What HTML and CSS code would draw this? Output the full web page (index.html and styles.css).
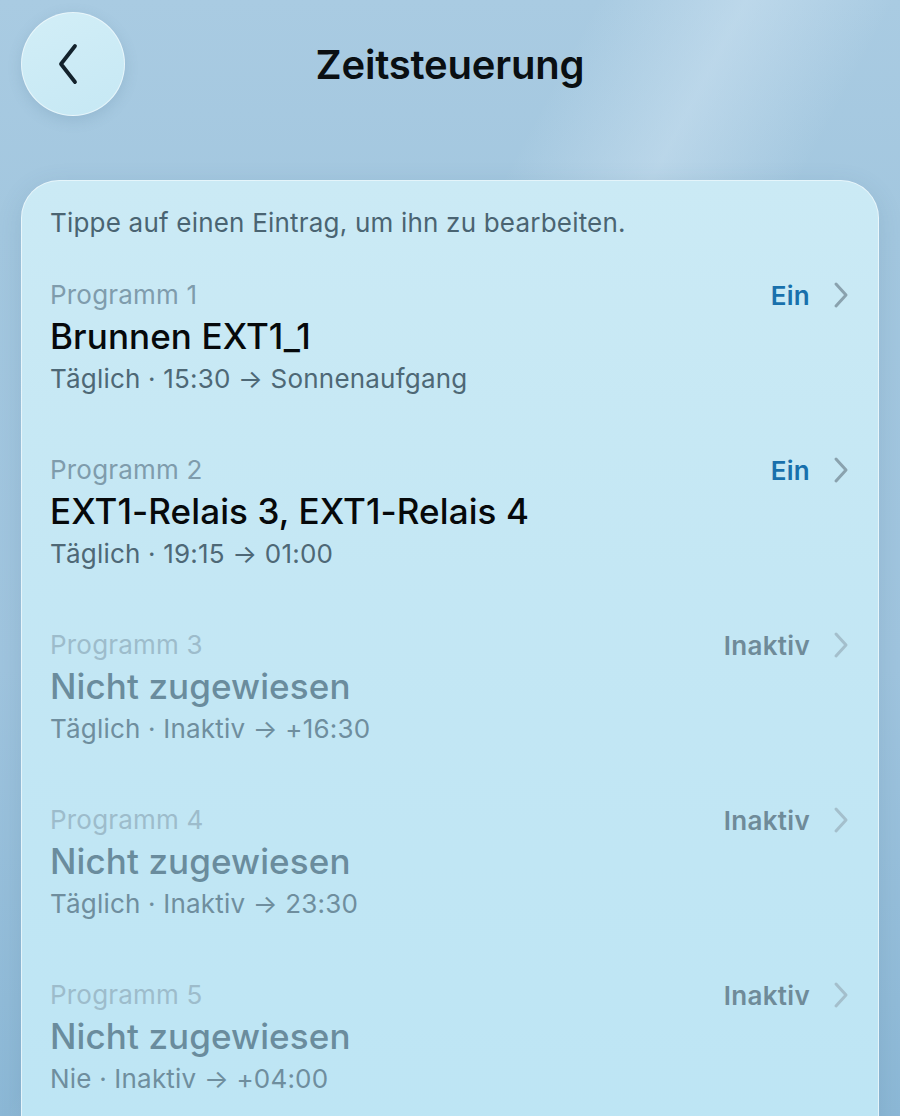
FILE: index.html
```html
<!DOCTYPE html>
<html lang="de">
<head>
<meta charset="utf-8">
<title>Zeitsteuerung</title>
<link rel="stylesheet" href="styles.css">
</head>
<body>
<div class="screen">
  <header class="topbar">
    <button class="back" aria-label="Zurück">
      <svg width="30" height="44" viewBox="0 0 30 44"><path d="M22 4 L8 22 L22 40" fill="none" stroke="#13222c" stroke-width="3.8" stroke-linecap="round" stroke-linejoin="round"/></svg>
    </button>
    <h1 class="title">Zeitsteuerung</h1>
  </header>

  <section class="card">
    <p class="hint">Tippe auf einen Eintrag, um ihn zu bearbeiten.</p>
    <ul class="list">
      <li class="row">
        <div class="info">
          <span class="label">Programm 1</span>
          <span class="name">Brunnen EXT1_1</span>
          <span class="detail">Täglich · 15:30 → Sonnenaufgang</span>
        </div>
        <div class="state"><span class="status on">Ein</span><svg class="chev" width="18" height="28" viewBox="0 0 18 28"><path d="M4 3 L14 14 L4 25" fill="none" stroke-width="3" stroke-linecap="round" stroke-linejoin="round"/></svg></div>
      </li>
      <li class="row">
        <div class="info">
          <span class="label">Programm 2</span>
          <span class="name">EXT1-Relais 3, EXT1-Relais 4</span>
          <span class="detail">Täglich · 19:15 → 01:00</span>
        </div>
        <div class="state"><span class="status on">Ein</span><svg class="chev" width="18" height="28" viewBox="0 0 18 28"><path d="M4 3 L14 14 L4 25" fill="none" stroke-width="3" stroke-linecap="round" stroke-linejoin="round"/></svg></div>
      </li>
      <li class="row inactive">
        <div class="info">
          <span class="label">Programm 3</span>
          <span class="name">Nicht zugewiesen</span>
          <span class="detail">Täglich · Inaktiv → +16:30</span>
        </div>
        <div class="state"><span class="status">Inaktiv</span><svg class="chev" width="18" height="28" viewBox="0 0 18 28"><path d="M4 3 L14 14 L4 25" fill="none" stroke-width="3" stroke-linecap="round" stroke-linejoin="round"/></svg></div>
      </li>
      <li class="row inactive">
        <div class="info">
          <span class="label">Programm 4</span>
          <span class="name">Nicht zugewiesen</span>
          <span class="detail">Täglich · Inaktiv → 23:30</span>
        </div>
        <div class="state"><span class="status">Inaktiv</span><svg class="chev" width="18" height="28" viewBox="0 0 18 28"><path d="M4 3 L14 14 L4 25" fill="none" stroke-width="3" stroke-linecap="round" stroke-linejoin="round"/></svg></div>
      </li>
      <li class="row inactive">
        <div class="info">
          <span class="label">Programm 5</span>
          <span class="name">Nicht zugewiesen</span>
          <span class="detail">Nie · Inaktiv → +04:00</span>
        </div>
        <div class="state"><span class="status">Inaktiv</span><svg class="chev" width="18" height="28" viewBox="0 0 18 28"><path d="M4 3 L14 14 L4 25" fill="none" stroke-width="3" stroke-linecap="round" stroke-linejoin="round"/></svg></div>
      </li>
    </ul>
  </section>
</div>
</body>
</html>
```

FILE: styles.css
```css
* { box-sizing: border-box; }

html, body {
  margin: 0;
  height: 100%;
}

body {
  font-family: Inter, "Noto Sans", "Liberation Sans", sans-serif;
  background:
    linear-gradient(118deg, rgba(255,255,255,0) 40%, rgba(225,240,250,0.35) 50%, rgba(255,255,255,0) 60%),
    linear-gradient(180deg, #a9cbe2 0%, #a3c7df 20%, #9fc4de 60%, #8cb8d6 100%);
  overflow: hidden;
}

.screen {
  height: 1116px;
  padding: 12px 21px 0;
  display: flex;
  flex-direction: column;
}

.topbar {
  height: 104px;
  display: flex;
  align-items: center;
  position: relative;
}

.back {
  width: 104px;
  height: 104px;
  border-radius: 50%;
  border: 1.5px solid rgba(255,255,255,0.55);
  background: linear-gradient(160deg, #d2eef7, #c6e8f4);
  box-shadow: 0 4px 14px rgba(70,110,140,0.18);
  display: flex;
  align-items: center;
  justify-content: center;
  padding: 0 10px 0 0;
  cursor: pointer;
}

.title {
  position: absolute;
  left: 0;
  right: 0;
  text-align: center;
  margin: 0;
  font-size: 40px;
  font-weight: 600;
  color: #0a0f12;
  letter-spacing: -0.2px;
  pointer-events: none;
}

.card {
  margin-top: 64px;
  flex: 1;
  border-radius: 38px 38px 0 0;
  border: 1.5px solid rgba(255,255,255,0.6);
  border-bottom: none;
  background: linear-gradient(180deg, #cbeaf5 0%, #c4e7f4 40%, #bde5f4 100%);
  box-shadow: 0 6px 24px rgba(60,100,130,0.15);
  padding: 26px 28px 0 28px;
}

.hint {
  margin: 0;
  font-size: 26px;
  line-height: 32px;
  color: #4a6472;
  letter-spacing: 0.2px;
}

.list {
  list-style: none;
  margin: 38px 0 0;
  padding: 0;
}

.row {
  height: 175px;
  display: flex;
  justify-content: space-between;
  align-items: flex-start;
}

.info {
  display: flex;
  flex-direction: column;
}

.label {
  font-size: 26px;
  line-height: 36px;
  color: #7f9cac;
  letter-spacing: 0.2px;
}

.name {
  font-size: 35px;
  line-height: 46px;
  font-weight: 500;
  color: #06090b;
  letter-spacing: 0.1px;
}

.detail {
  font-size: 26px;
  line-height: 40px;
  color: #4e6876;
  letter-spacing: 0.2px;
}

.state {
  display: flex;
  align-items: center;
  gap: 22px;
  height: 36px;
}

.status {
  font-size: 26px;
  font-weight: 600;
  letter-spacing: 0.3px;
}

.status.on { color: #1870ac; }

.chev path { stroke: #8aa2ae; }

.inactive .label { color: #9dbccb; }
.inactive .name { color: #6a8c9d; }
.inactive .detail { color: #6f8e9e; }
.inactive .status { color: #6f8b99; }
.inactive .chev path { stroke: #a4bfcc; }
```
